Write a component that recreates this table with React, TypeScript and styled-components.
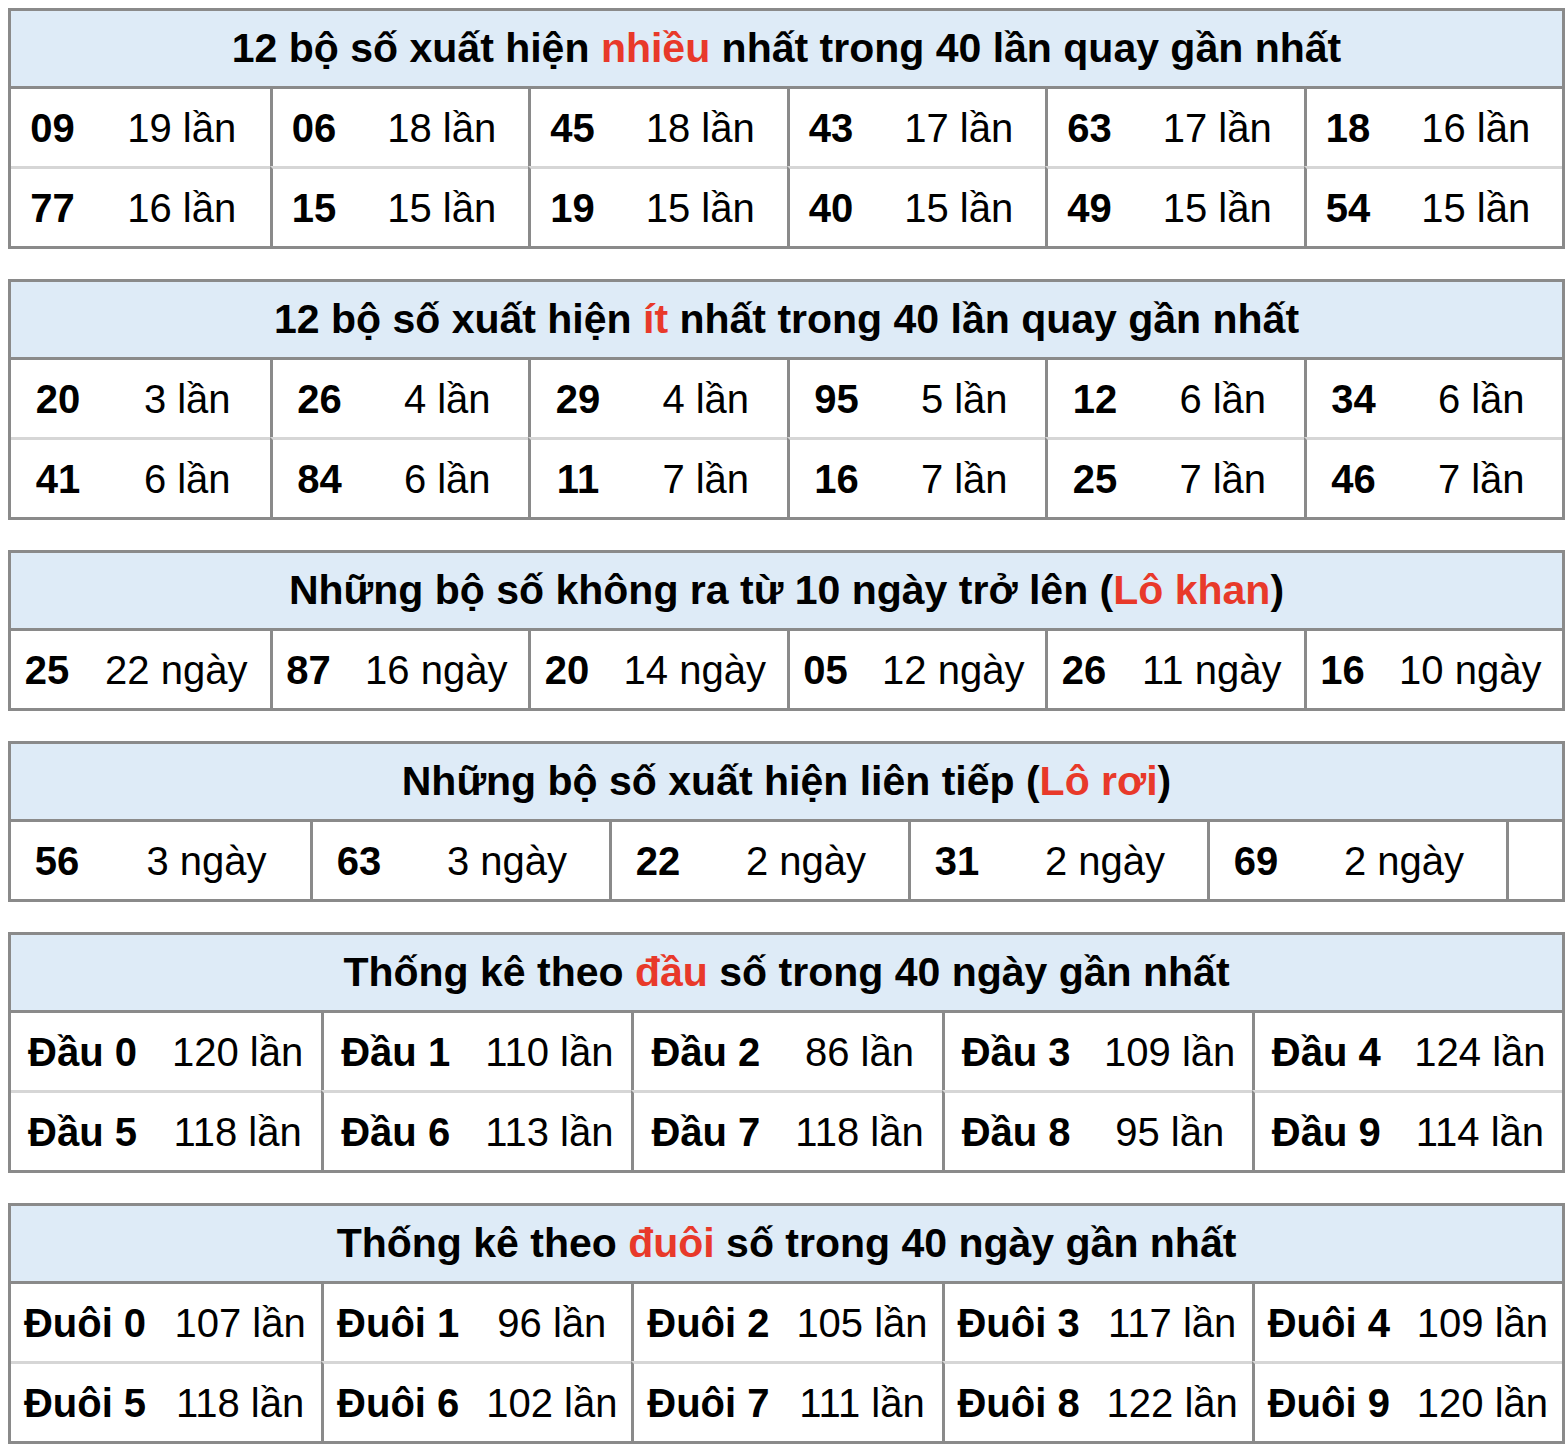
import React from "react";
import styled, { createGlobalStyle } from "styled-components";

const GlobalStyle = createGlobalStyle`
  html {
    overflow: hidden;
  }
  body {
    margin: 8px 0 0 8px;
    background: #fff;
    color: #000;
    font-family: "Liberation Sans", Arial, Helvetica, sans-serif;
  }
`;

const Page = styled.div`
  width: 1557px;
  display: flex;
  flex-direction: column;
  gap: 30px;
`;

const Table = styled.section`
  border: 3px solid #8a8a8a;
  background: #fff;
`;

const Title = styled.h2`
  margin: 0;
  height: 75px;
  display: flex;
  align-items: center;
  justify-content: center;
  background: #deebf7;
  border-bottom: 3px solid #8a8a8a;
  font-size: 41px;
  font-weight: 700;
  white-space: pre;
`;

const Hot = styled.span`
  color: #e8392a;
`;

const Grid = styled.div<{ $cols: string }>`
  display: grid;
  grid-template-columns: ${(p) => p.$cols};
`;

const Cell = styled.div<{ $num: number; $first: boolean; $lower: boolean }>`
  display: grid;
  grid-template-columns: ${(p) => p.$num}px 1fr;
  align-items: center;
  height: 75px;
  padding-top: 2px;
  border-left: ${(p) => (p.$first ? "none" : "3px solid #8a8a8a")};
  border-top: ${(p) => (p.$lower ? "3px solid #d6d6d6" : "none")};
  font-size: 40px;
  white-space: nowrap;
`;

const Num = styled.span`
  text-align: center;
  font-weight: 700;
`;

const Count = styled.span`
  text-align: center;
`;

type Pair = [string, string];

type Board = {
  title: React.ReactNode;
  cols: string;
  numWidth: number;
  perRow: number;
  items: (Pair | null)[];
};

const lan = (n: number) => `${n} lần`;
const ngay = (n: number) => `${n} ngày`;

const boards: Board[] = [
  {
    title: (
      <>
        12 bộ số xuất hiện <Hot>nhiều</Hot> nhất trong 40 lần quay gần nhất
      </>
    ),
    cols: "repeat(6, 1fr)",
    numWidth: 83,
    perRow: 6,
    items: [
      ["09", lan(19)], ["06", lan(18)], ["45", lan(18)], ["43", lan(17)], ["63", lan(17)], ["18", lan(16)],
      ["77", lan(16)], ["15", lan(15)], ["19", lan(15)], ["40", lan(15)], ["49", lan(15)], ["54", lan(15)],
    ],
  },
  {
    title: (
      <>
        12 bộ số xuất hiện <Hot>ít</Hot> nhất trong 40 lần quay gần nhất
      </>
    ),
    cols: "repeat(6, 1fr)",
    numWidth: 94,
    perRow: 6,
    items: [
      ["20", lan(3)], ["26", lan(4)], ["29", lan(4)], ["95", lan(5)], ["12", lan(6)], ["34", lan(6)],
      ["41", lan(6)], ["84", lan(6)], ["11", lan(7)], ["16", lan(7)], ["25", lan(7)], ["46", lan(7)],
    ],
  },
  {
    title: (
      <>
        Những bộ số không ra từ 10 ngày trở lên (<Hot>Lô khan</Hot>)
      </>
    ),
    cols: "repeat(6, 1fr)",
    numWidth: 72,
    perRow: 6,
    items: [
      ["25", ngay(22)], ["87", ngay(16)], ["20", ngay(14)], ["05", ngay(12)], ["26", ngay(11)], ["16", ngay(10)],
    ],
  },
  {
    title: (
      <>
        Những bộ số xuất hiện liên tiếp (<Hot>Lô rơi</Hot>)
      </>
    ),
    cols: "repeat(5, 299px) 1fr",
    numWidth: 92,
    perRow: 6,
    items: [["56", ngay(3)], ["63", ngay(3)], ["22", ngay(2)], ["31", ngay(2)], ["69", ngay(2)], null],
  },
  {
    title: (
      <>
        Thống kê theo <Hot>đầu</Hot> số trong 40 ngày gần nhất
      </>
    ),
    cols: "repeat(5, 1fr)",
    numWidth: 143,
    perRow: 5,
    items: [120, 110, 86, 109, 124, 118, 113, 118, 95, 114].map(
      (n, i): Pair => [`Đầu ${i}`, lan(n)]
    ),
  },
  {
    title: (
      <>
        Thống kê theo <Hot>đuôi</Hot> số trong 40 ngày gần nhất
      </>
    ),
    cols: "repeat(5, 1fr)",
    numWidth: 148,
    perRow: 5,
    items: [107, 96, 105, 117, 109, 118, 102, 111, 122, 120].map(
      (n, i): Pair => [`Đuôi ${i}`, lan(n)]
    ),
  },
];

function App() {
  return (
    <>
      <GlobalStyle />
      <Page>
        {boards.map((b, bi) => (
          <Table key={bi}>
            <Title>{b.title}</Title>
            <Grid $cols={b.cols}>
              {b.items.map((item, i) => (
                <Cell
                  key={i}
                  $num={b.numWidth}
                  $first={i % b.perRow === 0}
                  $lower={i >= b.perRow}
                >
                  {item && (
                    <>
                      <Num>{item[0]}</Num>
                      <Count>{item[1]}</Count>
                    </>
                  )}
                </Cell>
              ))}
            </Grid>
          </Table>
        ))}
      </Page>
    </>
  );
}

export default App;
